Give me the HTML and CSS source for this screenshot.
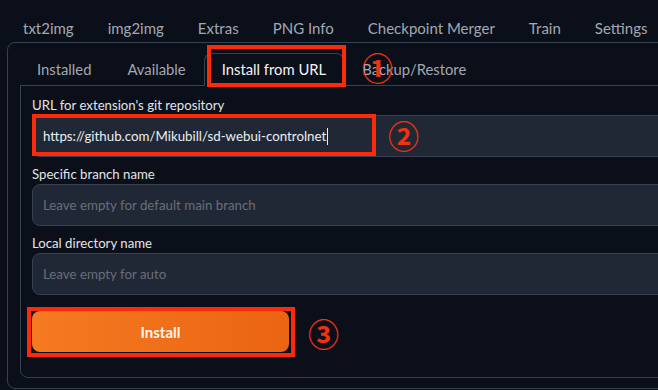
FILE: index.html
```html
<!DOCTYPE html>
<html>
<head>
<meta charset="utf-8">
<link rel="stylesheet" href="styles.css">
</head>
<body>
<div class="page">
  <nav class="top-tabs">
    <span class="tab">txt2img</span>
    <span class="tab">img2img</span>
    <span class="tab">Extras</span>
    <span class="tab">PNG Info</span>
    <span class="tab">Checkpoint Merger</span>
    <span class="tab">Train</span>
    <span class="tab">Settings</span>
  </nav>
  <section class="outer">
    <nav class="sub-tabs">
      <span class="sub">Installed</span>
      <span class="sub">Available</span>
      <span class="sub active">Install from URL</span>
      <span class="sub">Backup/Restore</span>
    </nav>
    <div class="inner">
      <div class="field">
        <label class="lbl">URL for extension's git repository</label>
        <div class="input filled">https://github.com/Mikubill/sd-webui-controlnet<span class="caret"></span></div>
      </div>
      <div class="field">
        <label class="lbl">Specific branch name</label>
        <div class="input placeholder">Leave empty for default main branch</div>
      </div>
      <div class="field">
        <label class="lbl">Local directory name</label>
        <div class="input placeholder">Leave empty for auto</div>
      </div>
      <div class="btn-row">
        <button class="install">Install</button>
      </div>
    </div>
  </section>

  <div class="mark box1"></div>
  <div class="mark box2"></div>
  <div class="mark box3"></div>
  <span class="num n1">①</span>
  <span class="num n2">②</span>
  <span class="num n3">③</span>
</div>
</body>
</html>
```

FILE: styles.css
```css
html, body {
  margin: 0;
  padding: 0;
  background: #0b0f19;
  overflow: hidden;
}
.page {
  position: relative;
  width: 658px;
  height: 390px;
  overflow: hidden;
  font-family: Lato, "Open Sans", sans-serif;
}
.top-tabs {
  display: flex;
  padding-left: 6px;
  height: 42px;
  align-items: flex-end;
}
.tab {
  padding: 0 17px 3px;
  font-size: 15px;
  line-height: 22px;
  color: #a3a8b2;
  white-space: nowrap;
}
.outer {
  margin-left: 7px;
  width: 880px;
  height: 347px;
  border: 1px solid #374151;
  border-radius: 8px 0 0 8px;
  padding-left: 12px;
  box-sizing: border-box;
}
.sub-tabs {
  display: flex;
  height: 42px;
  align-items: flex-end;
}
.sub {
  padding: 0 17px;
  height: 32px;
  line-height: 31px;
  font-size: 14.8px;
  color: #a3a8b2;
  white-space: nowrap;
  border: 1px solid transparent;
  border-bottom: none;
  box-sizing: border-box;
}
.sub:first-child { padding-left: 16px; }
.sub.active {
  color: #f3f4f6;
  border-color: #374151;
  border-radius: 8px 8px 0 0;
  background: #0b0f19;
  margin-bottom: -1px;
  height: 33px;
}
.inner {
  border: 1px solid #374151;
  border-radius: 0 0 0 8px;
  height: 293px;
  box-sizing: border-box;
  padding: 10px 0 0 11px;
  display: flex;
  flex-direction: column;
  gap: 8px;
}
.field {
  display: flex;
  flex-direction: column;
  gap: 1px;
}
.lbl {
  font-size: 13.2px;
  line-height: 18px;
  color: #e2e4e8;
}
.input {
  height: 42px;
  box-sizing: border-box;
  border: 1px solid #374151;
  border-radius: 8px 0 0 8px;
  background: #212835;
  padding-left: 10px;
  display: flex;
  align-items: center;
  font-size: 13.3px;
}
.filled { color: #eceef1; }
.placeholder { color: #676e7b; }
.caret {
  display: inline-block;
  width: 1px;
  height: 17px;
  background: #eceef1;
  margin-left: 1px;
}
.btn-row {
  padding-top: 8px;
}
.install {
  width: 257px;
  height: 41px;
  border: none;
  border-radius: 8px;
  background: linear-gradient(90deg, #f57a22, #eb6412);
  color: #fff5ee;
  font-family: Lato, "Open Sans", sans-serif;
  font-weight: 700;
  font-size: 15px;
}
.mark {
  position: absolute;
  border: 4px solid #fb2a0a;
  box-sizing: border-box;
}
.box1 { left: 207px; top: 45px; width: 139px; height: 42px; }
.box2 { left: 32px; top: 114px; width: 344px; height: 42px; }
.box3 { left: 27px; top: 307px; width: 268px; height: 50px; }
.num {
  position: absolute;
  color: #f2320f;
  font-family: "Noto Sans CJK JP", sans-serif;
  font-weight: 700;
  font-size: 31px;
  line-height: 31px;
}
.n1 { left: 362px; top: 51px; }
.n2 { left: 388px; top: 119px; }
.n3 { left: 308px; top: 317px; }
```
